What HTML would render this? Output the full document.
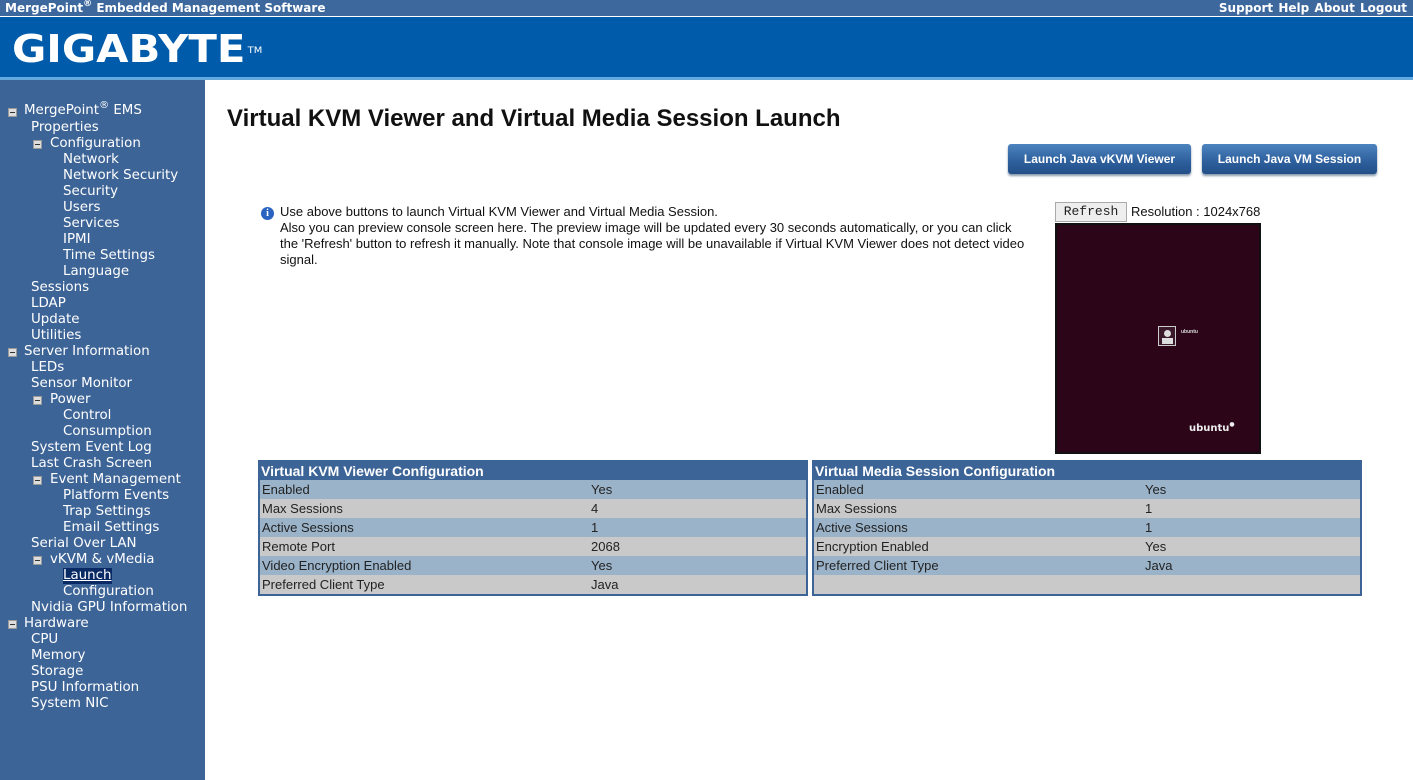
<!DOCTYPE html>
<html><head><style>
*{margin:0;padding:0;box-sizing:border-box}
body{width:1413px;height:780px;overflow:hidden;background:#fff;font-family:"Liberation Sans",Arial,sans-serif;position:relative}
#top{position:absolute;left:0;top:0;width:1413px;height:16px;background:#3d689e;color:#fff;font:bold 12px "DejaVu Sans",Verdana,sans-serif;line-height:16px;overflow:hidden}
#top .l{position:absolute;left:5px;top:0}
#top .r{position:absolute;right:6px;top:0;word-spacing:1px}
sup{line-height:0;position:relative;top:-1px}
#band{position:absolute;left:0;top:17px;width:1413px;height:60px;background:#005bab}
#band .logo{position:absolute;left:12px;top:12px;color:#fff;font:bold 38px "DejaVu Sans",Verdana,sans-serif;line-height:40px;transform:scaleX(1.1);transform-origin:left}
#band .tm{font-size:9px;vertical-align:top;position:relative;top:2px;margin-left:2px;font-weight:normal}
#line{position:absolute;left:0;top:77px;width:1413px;height:3px;background:#63a9e0}
#side{position:absolute;left:0;top:80px;width:205px;height:700px;background:#3d6497;color:#fff;font:13.4px "DejaVu Sans",Verdana,sans-serif}
#side div{position:absolute;height:16px;line-height:16px;white-space:nowrap}
.bx{display:inline-block;width:9px;height:9px;background:#ddd;border:1px solid #999;position:absolute;margin-top:4px}
.bx:after{content:"";position:absolute;left:1px;top:3px;width:5px;height:1px;background:#333}
h1{position:absolute;left:227px;top:105px;font:bold 24px "Liberation Sans",Arial,sans-serif;color:#111}
.btn{position:absolute;top:144px;height:30px;background:linear-gradient(#4c84c0,#2d5f9c 60%,#234f88);border-radius:3px;color:#fff;font:bold 12px "Liberation Sans",Arial,sans-serif;text-align:center;line-height:30px;box-shadow:0 2px 2px #8898aa}
.info{position:absolute;left:280px;top:204px;width:790px;font:13px "Liberation Sans",Arial,sans-serif;color:#111;line-height:16px;white-space:nowrap}
.ic{position:absolute;left:261px;top:207px;width:13px;height:13px;border-radius:50%;background:#2a64c0;color:#fff;font:bold 10px "Liberation Serif",serif;text-align:center;line-height:13px}
.ref{position:absolute;left:1055px;top:202px;width:72px;height:20px;background:#eee;border:1px solid #aaa;font:13px "Liberation Mono",monospace;text-align:center;line-height:18px;color:#222}
.res{position:absolute;left:1131px;top:204px;font:13px "Liberation Sans",Arial,sans-serif;color:#111}
.scr{position:absolute;left:1055px;top:223px;width:206px;height:231px;border:2px solid #111;background:#2c0618}
table{position:absolute;top:460px;border-collapse:collapse;border:2px solid #3d6497;font:13px "Liberation Sans",Arial,sans-serif;color:#222}
td{height:19px;padding:0 2px;line-height:19px}
th{background:#3d6497;color:#fff;text-align:left;font:bold 14px "Liberation Sans",Arial,sans-serif;height:18px;padding:0 1px;line-height:18px}
tr.o td{background:#9bb3c9}
tr.e td{background:#c9c9c9}
</style></head><body>
<div id="top"><span class="l">MergePoint<sup style="font-size:9px">®</sup> Embedded Management Software</span><span class="r">Support Help About Logout</span></div>
<div id="band"><div class="logo">GIGABYTE<span class="tm">TM</span></div></div>
<div id="line"></div>
<div id="side">
<div style="top:24px;left:8px"><span class="bx"></span></div><div style="top:23px;left:24px">MergePoint<sup style="font-size:10px">®</sup> EMS</div>
<div style="top:40px;left:31px">Properties</div>
<div style="top:56px;left:33px"><span class="bx"></span></div><div style="top:56px;left:50px">Configuration</div>
<div style="top:72px;left:63px">Network</div>
<div style="top:88px;left:63px">Network Security</div>
<div style="top:104px;left:63px">Security</div>
<div style="top:120px;left:63px">Users</div>
<div style="top:136px;left:63px">Services</div>
<div style="top:152px;left:63px">IPMI</div>
<div style="top:168px;left:63px">Time Settings</div>
<div style="top:184px;left:63px">Language</div>
<div style="top:200px;left:31px">Sessions</div>
<div style="top:216px;left:31px">LDAP</div>
<div style="top:232px;left:31px">Update</div>
<div style="top:248px;left:31px">Utilities</div>
<div style="top:264px;left:8px"><span class="bx"></span></div><div style="top:264px;left:24px">Server Information</div>
<div style="top:280px;left:31px">LEDs</div>
<div style="top:296px;left:31px">Sensor Monitor</div>
<div style="top:312px;left:33px"><span class="bx"></span></div><div style="top:312px;left:50px">Power</div>
<div style="top:328px;left:63px">Control</div>
<div style="top:344px;left:63px">Consumption</div>
<div style="top:360px;left:31px">System Event Log</div>
<div style="top:376px;left:31px">Last Crash Screen</div>
<div style="top:392px;left:33px"><span class="bx"></span></div><div style="top:392px;left:50px">Event Management</div>
<div style="top:408px;left:63px">Platform Events</div>
<div style="top:424px;left:63px">Trap Settings</div>
<div style="top:440px;left:63px">Email Settings</div>
<div style="top:456px;left:31px">Serial Over LAN</div>
<div style="top:472px;left:33px"><span class="bx"></span></div><div style="top:472px;left:50px">vKVM &amp; vMedia</div>
<div style="top:488px;left:63px;background:#0a2a66;text-decoration:underline">Launch</div>
<div style="top:504px;left:63px">Configuration</div>
<div style="top:520px;left:31px">Nvidia GPU Information</div>
<div style="top:536px;left:8px"><span class="bx"></span></div><div style="top:536px;left:24px">Hardware</div>
<div style="top:552px;left:31px">CPU</div>
<div style="top:568px;left:31px">Memory</div>
<div style="top:584px;left:31px">Storage</div>
<div style="top:600px;left:31px">PSU Information</div>
<div style="top:616px;left:31px">System NIC</div>
</div>
<h1>Virtual KVM Viewer and Virtual Media Session Launch</h1>
<div class="btn" style="left:1008px;width:183px">Launch Java vKVM Viewer</div>
<div class="btn" style="left:1202px;width:175px">Launch Java VM Session</div>
<div class="ic">i</div>
<div class="info">Use above buttons to launch Virtual KVM Viewer and Virtual Media Session.<br>Also you can preview console screen here. The preview image will be updated every 30 seconds automatically, or you can click<br>the 'Refresh' button to refresh it manually. Note that console image will be unavailable if Virtual KVM Viewer does not detect video<br>signal.</div>
<div class="ref">Refresh</div>
<div class="res">Resolution : 1024x768</div>
<div class="scr">
<div style="position:absolute;left:101px;top:101px;width:18px;height:20px;border:1px solid #ccc;background:#3a1a2a"><div style="position:absolute;left:5px;top:3px;width:7px;height:7px;border-radius:50%;background:#ddd"></div><div style="position:absolute;left:3px;top:11px;width:11px;height:6px;background:#ddd"></div></div>
<div style="position:absolute;left:124px;top:104px;color:#ddd;font:bold 5px sans-serif">ubuntu</div>
<div style="position:absolute;left:132px;top:198px;color:#eee;font:bold 10px 'DejaVu Sans',sans-serif">ubuntu<sup style="font-size:6px">●</sup></div>
</div>
<table style="left:258px;width:550px">
<tr><th colspan="2">Virtual KVM Viewer Configuration</th></tr>
<tr class="o"><td style="width:330px">Enabled</td><td>Yes</td></tr>
<tr class="e"><td>Max Sessions</td><td>4</td></tr>
<tr class="o"><td>Active Sessions</td><td>1</td></tr>
<tr class="e"><td>Remote Port</td><td>2068</td></tr>
<tr class="o"><td>Video Encryption Enabled</td><td>Yes</td></tr>
<tr class="e"><td>Preferred Client Type</td><td>Java</td></tr>
</table>
<table style="left:812px;width:550px">
<tr><th colspan="2">Virtual Media Session Configuration</th></tr>
<tr class="o"><td style="width:330px">Enabled</td><td>Yes</td></tr>
<tr class="e"><td>Max Sessions</td><td>1</td></tr>
<tr class="o"><td>Active Sessions</td><td>1</td></tr>
<tr class="e"><td>Encryption Enabled</td><td>Yes</td></tr>
<tr class="o"><td>Preferred Client Type</td><td>Java</td></tr>
<tr class="e"><td>&nbsp;</td><td></td></tr>
</table>
</body></html>
